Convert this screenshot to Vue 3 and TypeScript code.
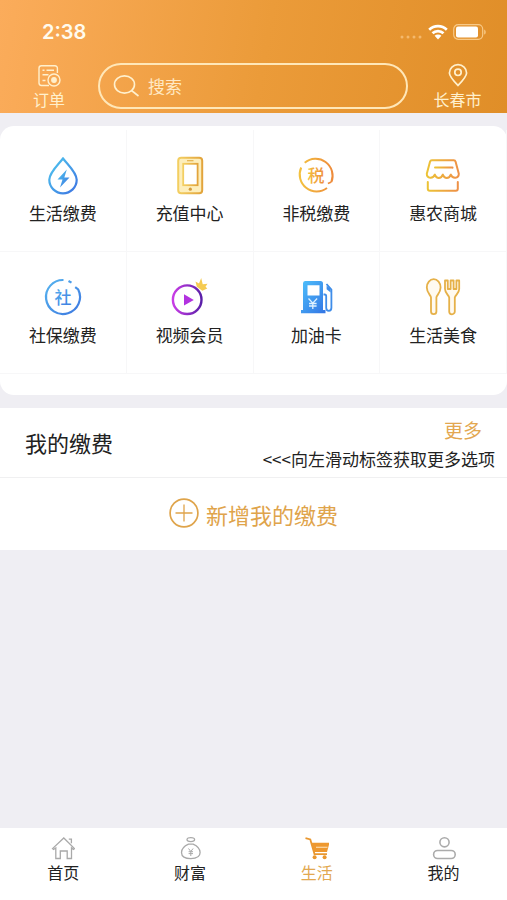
<script setup lang="ts">
import { ref } from 'vue'

interface Service {
  id: string
  label: string
}

const services: Service[] = [
  { id: 'utility', label: '生活缴费' },
  { id: 'recharge', label: '充值中心' },
  { id: 'tax', label: '非税缴费' },
  { id: 'shop', label: '惠农商城' },
  { id: 'social', label: '社保缴费' },
  { id: 'video', label: '视频会员' },
  { id: 'fuel', label: '加油卡' },
  { id: 'food', label: '生活美食' },
]

const tabs: Service[] = [
  { id: 'home', label: '首页' },
  { id: 'wealth', label: '财富' },
  { id: 'life', label: '生活' },
  { id: 'me', label: '我的' },
]

const activeTab = ref('life')
const keyword = ref('')
</script>

<template>
  <div class="page">
    <header class="header">
      <div class="status">
        <span class="time">2:38</span>
        <span class="signals">
          <svg class="dots" width="24" height="6" viewBox="0 0 24 6" aria-hidden="true">
            <g fill="#fbc987" opacity="0.7">
              <circle cx="3" cy="3" r="1.5" /><circle cx="9" cy="3" r="1.5" />
              <circle cx="15" cy="3" r="1.5" /><circle cx="21" cy="3" r="1.5" />
            </g>
          </svg>
          <svg width="20" height="16" viewBox="0 0 20 16" aria-hidden="true">
            <g fill="none" stroke="#fff" stroke-width="2.7">
              <path d="M1.2 5.8a12.6 12.6 0 0 1 17.6 0" />
              <path d="M4.5 9.3a7.8 7.8 0 0 1 11 0" />
            </g>
            <path d="M10 15.4l-3.4-3.6a4.8 4.8 0 0 1 6.8 0z" fill="#fff" />
          </svg>
          <svg width="34" height="16" viewBox="0 0 34 16" aria-hidden="true">
            <rect x="0.7" y="0.7" width="29" height="14.6" rx="4.5" fill="none" stroke="#f8c987" stroke-width="1.2" />
            <rect x="3" y="2.6" width="22" height="10.8" rx="2" fill="#fff" />
            <path d="M31.2 5.4c2 .9 2 4.3 0 5.2z" fill="#f8c987" />
          </svg>
        </span>
      </div>
      <div class="toolbar">
        <a class="tool" href="#orders">
          <svg width="24" height="24" viewBox="0 0 24 24" fill="none" stroke="currentColor" stroke-width="1.4" aria-hidden="true">
            <path d="M12 22.500H4.400a2.400 2.400 0 0 1-2.400-2.400V5.200a2.400 2.400 0 0 1 2.400-2.400H18a2.400 2.400 0 0 1 2.400 2.400V10" />
            <path d="M5.500 7.200h2M9.500 7.200h7.500M5.500 11.700h6M5.500 17.500h3" />
            <circle cx="17" cy="17" r="6" />
            <circle cx="17" cy="17" r="2.200" fill="currentColor" />
          </svg>
          <span>订单</span>
        </a>
        <form class="search" role="search" @submit.prevent>
          <svg width="27" height="24" viewBox="0 0 27 24" fill="none" stroke="currentColor" stroke-width="1.600" aria-hidden="true">
            <ellipse cx="11.500" cy="10.500" rx="10" ry="8.600" />
            <path d="M18.500 16.500l7 5.500" />
          </svg>
          <input v-model="keyword" type="search" placeholder="搜索" aria-label="搜索" />
        </form>
        <a class="tool" href="#city">
          <svg width="24" height="24" viewBox="0 0 24 24" fill="none" stroke="currentColor" stroke-width="1.700" aria-hidden="true">
            <path d="M12 22.500C7 17.200 3.400 13.400 3.400 9.900a8.600 8.300 0 0 1 17.200 0c0 3.500-3.600 7.300-8.600 12.600z" />
            <circle cx="12" cy="9.300" r="3.200" />
          </svg>
          <span>长春市</span>
        </a>
      </div>
    </header>

    <main class="content">
      <nav class="services" aria-label="生活服务">
        <a v-for="s in services" :key="s.id" class="service" :href="'#' + s.id">
          <svg v-if="s.id === 'utility'" class="icon" viewBox="0 0 40 40" aria-hidden="true">
            <defs>
              <linearGradient id="g-drop" x1="0" y1="0" x2="1" y2="1">
                <stop offset="0" stop-color="#4fc8ee" /><stop offset="1" stop-color="#3d74e2" />
              </linearGradient>
            </defs>
            <path d="M20 3.500C15 10 6.300 17.500 6.300 24.800a13.700 13.500 0 0 0 27.400 0C33.700 17.500 25 10 20 3.500z" fill="none" stroke="url(#g-drop)" stroke-width="2.200" />
            <path d="M23.800 14.500L14.500 24.600h5L17 32.500l9.500-10h-5.200z" fill="url(#g-drop)" />
          </svg>
          <svg v-else-if="s.id === 'recharge'" class="icon" viewBox="0 0 40 40" aria-hidden="true">
            <defs>
              <linearGradient id="g-phone" x1="0" y1="0" x2="1" y2="0">
                <stop offset="0" stop-color="#f3cf62" /><stop offset="1" stop-color="#e2a43c" />
              </linearGradient>
            </defs>
            <rect x="8.200" y="2.800" width="24" height="35.400" rx="3" fill="#fdeebb" stroke="url(#g-phone)" stroke-width="2" />
            <rect x="13.200" y="8.800" width="14.400" height="21.400" fill="#fff" stroke="url(#g-phone)" stroke-width="1.800" />
            <path d="M17 5.700h6.500" stroke="#e5b04b" stroke-width="1.200" />
            <circle cx="20.300" cy="34.200" r="1.600" fill="#d49b3c" />
          </svg>
          <svg v-else-if="s.id === 'tax'" class="icon" viewBox="0 0 40 40" aria-hidden="true">
            <defs>
              <linearGradient id="g-tax" x1="0" y1="0" x2="1" y2="0">
                <stop offset="0" stop-color="#f3c13f" /><stop offset="1" stop-color="#ee8b3b" />
              </linearGradient>
            </defs>
            <path d="M8.700 7.700A17 17 0 0 1 35.400 27M31 33A17 17 0 0 1 5.200 12.500" fill="none" stroke="url(#g-tax)" stroke-width="2" />
            <path d="M35.400 27l-3.500 1.500" stroke="#ee8b3b" stroke-width="1.600" />
            <text class="glyph" x="20" y="26.500" fill="url(#g-tax)">税</text>
          </svg>
          <svg v-else-if="s.id === 'shop'" class="icon" viewBox="0 0 40 40" aria-hidden="true">
            <defs>
              <linearGradient id="g-shop" x1="0" y1="0" x2="1" y2="0">
                <stop offset="0" stop-color="#ecc336" /><stop offset="1" stop-color="#ee9147" />
              </linearGradient>
            </defs>
            <g fill="none" stroke="url(#g-shop)" stroke-width="2" stroke-linejoin="round" stroke-linecap="round">
              <path d="M9 5.200h21.600a2 2 0 0 1 2 1.500l3.200 12.100c0 5-6.400 5.200-8 .8-1.600 4.400-6.400 4.400-8 0-1.600 4.400-6.400 4.400-8 0-1.600 4.400-8 4.200-8-.8L7 6.700a2 2 0 0 1 2-1.500z" />
              <path d="M12 12.600h17.500V12.700" />
              <path d="M4.800 27v6.800a2 2 0 0 0 2 2h26a2 2 0 0 0 2-2V27" />
            </g>
          </svg>
          <svg v-else-if="s.id === 'social'" class="icon" viewBox="0 0 40 40" aria-hidden="true">
            <defs>
              <linearGradient id="g-social" x1="0" y1="0" x2="1" y2="1">
                <stop offset="0" stop-color="#56b4ef" /><stop offset="1" stop-color="#3c78e0" />
              </linearGradient>
            </defs>
            <path d="M20.500 3A17 17 0 1 0 35.200 12.400l-3-2.200M25.500 4l3 1.600" fill="none" stroke="url(#g-social)" stroke-width="2.200" />
            <text class="glyph" x="20" y="26.500" fill="url(#g-social)">社</text>
          </svg>
          <svg v-else-if="s.id === 'video'" class="icon" viewBox="0 0 40 40" aria-hidden="true">
            <defs>
              <linearGradient id="g-video" x1="0" y1="0" x2="1" y2="0">
                <stop offset="0" stop-color="#c93de6" /><stop offset="1" stop-color="#5a1fa8" />
              </linearGradient>
            </defs>
            <circle cx="17.200" cy="22.700" r="14.300" fill="none" stroke="url(#g-video)" stroke-width="2.400" />
            <path d="M14 17.200l9.800 5.700-9.800 5.700z" fill="#b232e0" />
            <path d="M26.800 9.800L25.500 4.500l3.500 1.900L31.200 1l1.500 6.300 4.800-.6-2 3 1.800 1.800-5 2.300z" fill="#f5cb52" />
          </svg>
          <svg v-else-if="s.id === 'fuel'" class="icon" viewBox="0 0 40 40" aria-hidden="true">
            <defs>
              <linearGradient id="g-fuel" x1="0" y1="0" x2="1" y2="1">
                <stop offset="0" stop-color="#4ec0fb" /><stop offset="1" stop-color="#3374e4" />
              </linearGradient>
            </defs>
            <path fill-rule="evenodd" d="M9 4h15.500a2.500 2.500 0 0 1 2.500 2.500V33h2.500v3.300H5V33h2V6.500A2.500 2.500 0 0 1 9 4zM11.500 8.300v10.300h12V8.300z" fill="url(#g-fuel)" />
            <path d="M12.500 21.500l4.300 4.600 4.300-4.600M16.800 26v6M13 26.500h7.600M13 29h7.600" fill="none" stroke="#dff1ff" stroke-width="1.300" />
            <path d="M27.500 17.500h1.200c1.200 0 1.500.8 1.500 1.800v11.500c0 4 5.200 4 5.200 0V12.500L30.500 7" fill="none" stroke="#3f8de9" stroke-width="1.800" />
            <path d="M30.600 8.500v3.700l4 3.300v-3.800z" fill="#3f8de9" />
          </svg>
          <svg v-else class="icon" viewBox="0 0 40 40" aria-hidden="true">
            <g fill="#fffaf0" stroke="#e6b149" stroke-width="1.800" stroke-linejoin="round">
              <path d="M8 34.500V20.500C8 18.500 3.800 16 3.800 10.500a6.900 8.300 0 0 1 13.800 0c0 5.500-4.200 8-4.200 10v14a2.700 2.700 0 0 1-5.400 0z" />
              <path d="M22 3.500h2.800V12h2.800V3.500h3V12h2.800V3.500h2.800V12c0 4-3.800 6-4.400 8.500v14a2.800 2.800 0 0 1-5.600 0v-14C25.600 18 22 16 22 12z" />
            </g>
          </svg>
          <span>{{ s.label }}</span>
        </a>
      </nav>

      <section class="bills">
        <div class="bills-head">
          <h2>我的缴费</h2>
          <div class="bills-side">
            <a class="more" href="#more">更多</a>
            <p>&lt;&lt;&lt;向左滑动标签获取更多选项</p>
          </div>
        </div>
        <button class="add" type="button">
          <svg width="30" height="30" viewBox="0 0 30 30" fill="none" stroke="currentColor" aria-hidden="true">
            <circle cx="15" cy="15" r="13.900" stroke-width="1.700" />
            <path d="M15 6.500v17M6.500 15h17" stroke-width="1.300" />
          </svg>
          <span>新增我的缴费</span>
        </button>
      </section>
    </main>

    <nav class="tabs" aria-label="主导航">
      <button
        v-for="t in tabs"
        :key="t.id"
        type="button"
        class="tab"
        :class="{ active: t.id === activeTab }"
        @click="activeTab = t.id"
      >
        <svg v-if="t.id === 'home'" width="24" height="24" viewBox="0 0 24 24" fill="none" stroke="#a9a9a9" stroke-width="1.300" aria-hidden="true">
          <path d="M1.500 12.600L12.800 2l10.700 10.600-1 .9-2-1.600V22.500h-4.300V15H9.300v7.500H4.800V12l-2.300 1.500zM17.800 3.200h2.600v4" />
        </svg>
        <svg v-else-if="t.id === 'wealth'" width="24" height="24" viewBox="0 0 24 24" fill="none" stroke="#a9a9a9" stroke-width="1.300" aria-hidden="true">
          <ellipse cx="12.800" cy="3.600" rx="3.800" ry="2" />
          <path d="M10.500 8.200h4.600c3.500 1.600 7 5 7 8.400 0 4.200-3.400 6-9.300 6s-9.300-1.800-9.300-6c0-3.400 3.500-6.800 7-8.400z" />
          <path d="M10.500 12.500l2.300 3 2.300-3M12.800 15.500v4.500M10.600 15.700H15M10.600 17.600H15" stroke-width="1" />
        </svg>
        <svg v-else-if="t.id === 'life'" width="24" height="24" viewBox="0 0 24 24" aria-hidden="true">
          <path d="M.5 2.200l4.800 1.200 4.200 14.700H22" fill="none" stroke="#e9972f" stroke-width="1.800" />
          <path d="M6.300 6.800H24.500L22 16H8.900z" fill="#ee982f" />
          <path d="M11 11.300h11.500" stroke="#fbd9a8" stroke-width="1.200" />
          <circle cx="9.600" cy="21.200" r="2" fill="#e9972f" />
          <circle cx="19.600" cy="21.200" r="2" fill="#e9972f" />
        </svg>
        <svg v-else width="24" height="24" viewBox="0 0 24 24" fill="none" stroke="#ababab" stroke-width="1.600" aria-hidden="true">
          <circle cx="12.500" cy="6.300" r="4.600" />
          <rect x="1.600" y="14.500" width="21.600" height="8" rx="4" />
        </svg>
        <span>{{ t.label }}</span>
      </button>
    </nav>
  </div>
</template>

<style>
body {
  margin: 0;
  background: #efeef3;
}
</style>

<style scoped>
.page {
  display: flex;
  flex-direction: column;
  min-height: 100vh;
  background: #efeef3;
  color: #222;
  font-family: "Noto Sans CJK SC", sans-serif;
}

a {
  color: inherit;
  text-decoration: none;
}

button {
  padding: 0;
  border: 0;
  background: none;
  color: inherit;
  font: inherit;
  cursor: pointer;
}

svg {
  display: block;
  flex: none;
}

.header {
  padding-bottom: 2px;
  background: linear-gradient(100deg, #fbac5b 0%, #eb9b39 52%, #e08e28 100%);
  color: #fff0cd;
}

.status {
  display: flex;
  align-items: center;
  justify-content: space-between;
  height: 63px;
  padding: 0 20px 0 42px;
  box-sizing: border-box;
}

.time {
  color: #fffbee;
  font: 600 20px/24px Inter, sans-serif;
}

.signals {
  display: flex;
  align-items: center;
  gap: 5px;
}

.dots {
  align-self: flex-end;
}

.toolbar {
  display: grid;
  grid-template-columns: 98px 1fr 99px;
  align-items: start;
}

.tool {
  display: flex;
  flex-direction: column;
  align-items: center;
  font-size: 16px;
  line-height: 24px;
}

.search {
  display: flex;
  align-items: center;
  gap: 8px;
  height: 46px;
  padding: 0 16px 0 13px;
  box-sizing: border-box;
  border: 2px solid #ffe7b8;
  border-radius: 23px;
}

.search input {
  flex: 1;
  min-width: 0;
  padding: 0;
  border: 0;
  outline: 0;
  background: none;
  appearance: none;
  color: inherit;
  font: 17px/24px "Noto Sans CJK SC", sans-serif;
}

.search input::placeholder {
  color: #ffe9c4;
  opacity: 1;
}

.content {
  display: flex;
  flex-direction: column;
  gap: 13px;
  padding-top: 13px;
}

.services {
  display: grid;
  grid-template-columns: repeat(4, 1fr);
  padding: 4px 0 21px;
  border-radius: 14px;
  background: #fff;
}

.service {
  display: flex;
  flex-direction: column;
  align-items: center;
  gap: 6px;
  height: 122px;
  padding-top: 25px;
  box-sizing: border-box;
  border-right: 1px solid #f7f7f8;
  border-bottom: 1px solid #f7f7f8;
  font-size: 17px;
  line-height: 24px;
}

.icon {
  width: 40px;
  height: 40px;
}

.glyph {
  font-size: 17px;
  font-weight: 500;
  text-anchor: middle;
}

.bills {
  background: #fff;
}

.bills-head {
  display: flex;
  align-items: flex-start;
  justify-content: space-between;
  padding: 8px 12px 6px 25px;
  border-bottom: 1px solid #f0f0f1;
}

h2 {
  margin: 0;
  padding-top: 10px;
  font-size: 22px;
  font-weight: 400;
  line-height: 32px;
}

.bills-side {
  display: flex;
  flex-direction: column;
  align-items: flex-end;
  gap: 3px;
}

.more {
  padding-right: 13px;
  color: #e3a750;
  font-size: 19px;
  line-height: 28px;
}

.bills-side p {
  margin: 0;
  font-size: 17px;
  line-height: 24px;
}

.add {
  display: flex;
  align-items: flex-start;
  justify-content: center;
  gap: 7px;
  width: 100%;
  padding: 20px 0;
  color: #dfa44b;
  font-size: 22px;
  line-height: 32px;
}

.tabs {
  display: grid;
  grid-template-columns: repeat(4, 1fr);
  margin-top: auto;
  background: #fff;
}

.tab {
  display: flex;
  flex-direction: column;
  align-items: center;
  padding: 8px 0 16px;
  font-size: 16px;
  line-height: 24px;
}

.tab.active {
  color: #e2a850;
}
</style>
